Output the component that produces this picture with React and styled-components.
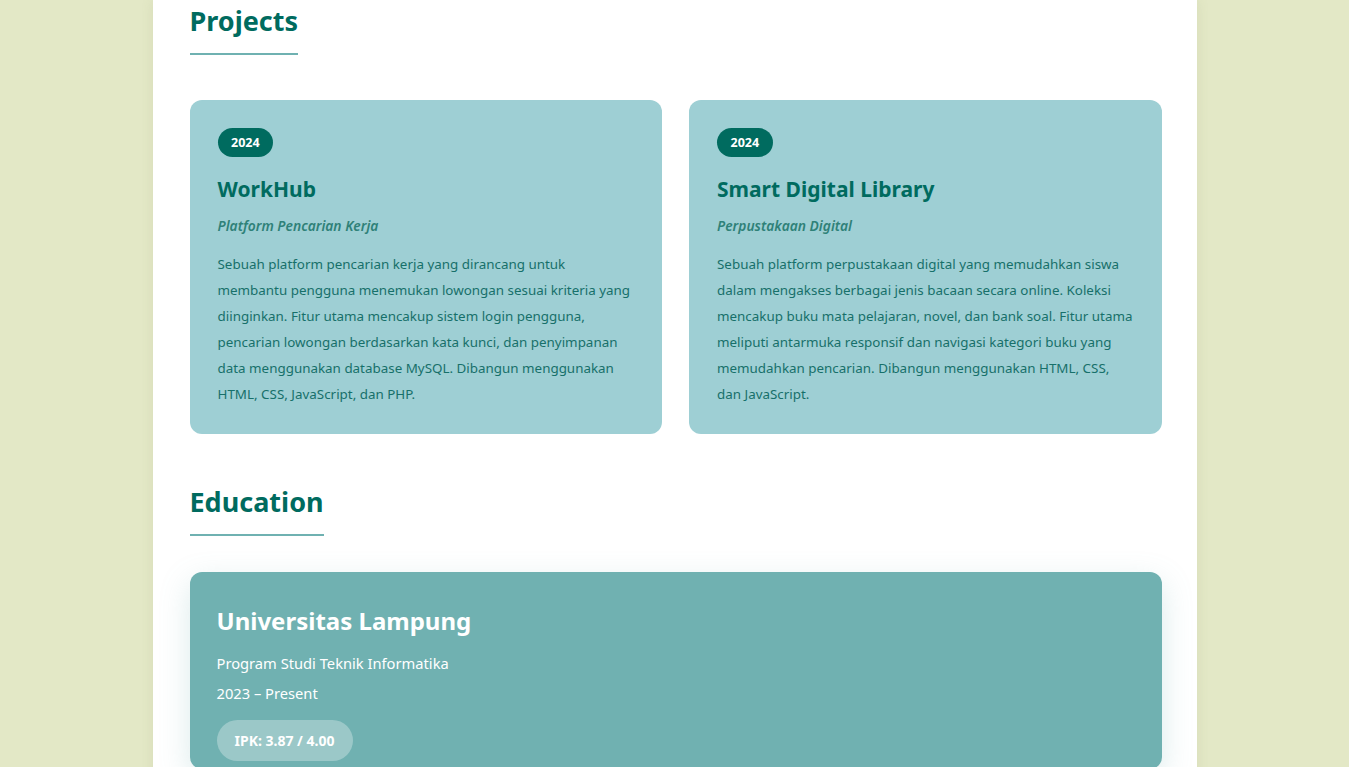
import React from 'react'
import styled, { createGlobalStyle } from 'styled-components'

const GlobalStyle = createGlobalStyle`
  html, body {
    margin: 0;
    padding: 0;
    background: #e3e8c6;
    font-family: "Noto Sans", "Open Sans", sans-serif;
  }
`

const Page = styled.main`
  width: 1044px;
  margin: 0 auto;
  background: #fff;
  padding: 0 35px 40px 37px;
  box-sizing: border-box;
  min-height: 767px;
  box-shadow: 0 0 12px rgba(120, 130, 80, 0.12);
`

const Section = styled.section`
  padding-top: ${p => p.$top}px;
`

const SectionTitle = styled.h2`
  display: inline-block;
  margin: 0 0 ${p => p.$gap}px;
  padding-bottom: 14px;
  font-size: 27px;
  line-height: 36px;
  font-weight: 700;
  color: #006b5f;
  border-bottom: 2px solid #6fb1b1;
`

const Grid = styled.div`
  display: grid;
  grid-template-columns: 1fr 1fr;
  gap: 27px;
`

const ProjectCard = styled.article`
  background: #9ecfd4;
  border-radius: 12px;
  padding: 28px 28px 27px;
`

const Year = styled.span`
  display: inline-block;
  background: #006b5f;
  color: #fff;
  font-size: 12.5px;
  font-weight: 700;
  line-height: 29px;
  padding: 0 13.5px;
  border-radius: 15px;
`

const ProjectTitle = styled.h3`
  margin: 18px 0 0;
  font-size: 21px;
  line-height: 28px;
  font-weight: 700;
  color: #006b5f;
`

const Subtitle = styled.p`
  margin: 13px 0 0;
  font-size: 13.8px;
  line-height: 19px;
  font-style: italic;
  font-weight: 600;
  color: #2f8178;
`

const Description = styled.p`
  margin: 16px 0 0;
  font-size: 13.4px;
  line-height: 26px;
  color: #17706a;
`

const EduCard = styled.article`
  background: #70b1b1;
  border-radius: 12px;
  padding: 32px 27px 8px;
  box-shadow: 0 10px 30px rgba(112, 177, 177, 0.25);
  color: #fff;
`

const School = styled.h3`
  margin: 0;
  font-size: 24px;
  line-height: 34px;
  font-weight: 700;
`

const EduLine = styled.p`
  margin: ${p => p.$top}px 0 0;
  font-size: 14.7px;
  line-height: 22px;
`

const Gpa = styled.span`
  display: inline-block;
  margin-top: 16px;
  padding: 0 18px;
  line-height: 41px;
  border-radius: 21px;
  background: rgba(255, 255, 255, 0.3);
  font-size: 14px;
  font-weight: 700;
`

const projects = [
  {
    year: '2024',
    title: 'WorkHub',
    subtitle: 'Platform Pencarian Kerja',
    text: 'Sebuah platform pencarian kerja yang dirancang untuk membantu pengguna menemukan lowongan sesuai kriteria yang diinginkan. Fitur utama mencakup sistem login pengguna, pencarian lowongan berdasarkan kata kunci, dan penyimpanan data menggunakan database MySQL. Dibangun menggunakan HTML, CSS, JavaScript, dan PHP.',
  },
  {
    year: '2024',
    title: 'Smart Digital Library',
    subtitle: 'Perpustakaan Digital',
    text: 'Sebuah platform perpustakaan digital yang memudahkan siswa dalam mengakses berbagai jenis bacaan secara online. Koleksi mencakup buku mata pelajaran, novel, dan bank soal. Fitur utama meliputi antarmuka responsif dan navigasi kategori buku yang memudahkan pencarian. Dibangun menggunakan HTML, CSS, dan JavaScript.',
  },
]

export default function App() {
  return (
    <>
      <GlobalStyle />
      <Page>
        <Section $top={3}>
          <SectionTitle $gap={45}>Projects</SectionTitle>
          <Grid>
            {projects.map(p => (
              <ProjectCard key={p.title}>
                <Year>{p.year}</Year>
                <ProjectTitle>{p.title}</ProjectTitle>
                <Subtitle>{p.subtitle}</Subtitle>
                <Description>{p.text}</Description>
              </ProjectCard>
            ))}
          </Grid>
        </Section>
        <Section $top={50}>
          <SectionTitle $gap={36}>Education</SectionTitle>
          <EduCard>
            <School>Universitas Lampung</School>
            <EduLine $top={14}>Program Studi Teknik Informatika</EduLine>
            <EduLine $top={8}>2023 – Present</EduLine>
            <Gpa>IPK: 3.87 / 4.00</Gpa>
          </EduCard>
        </Section>
      </Page>
    </>
  )
}
